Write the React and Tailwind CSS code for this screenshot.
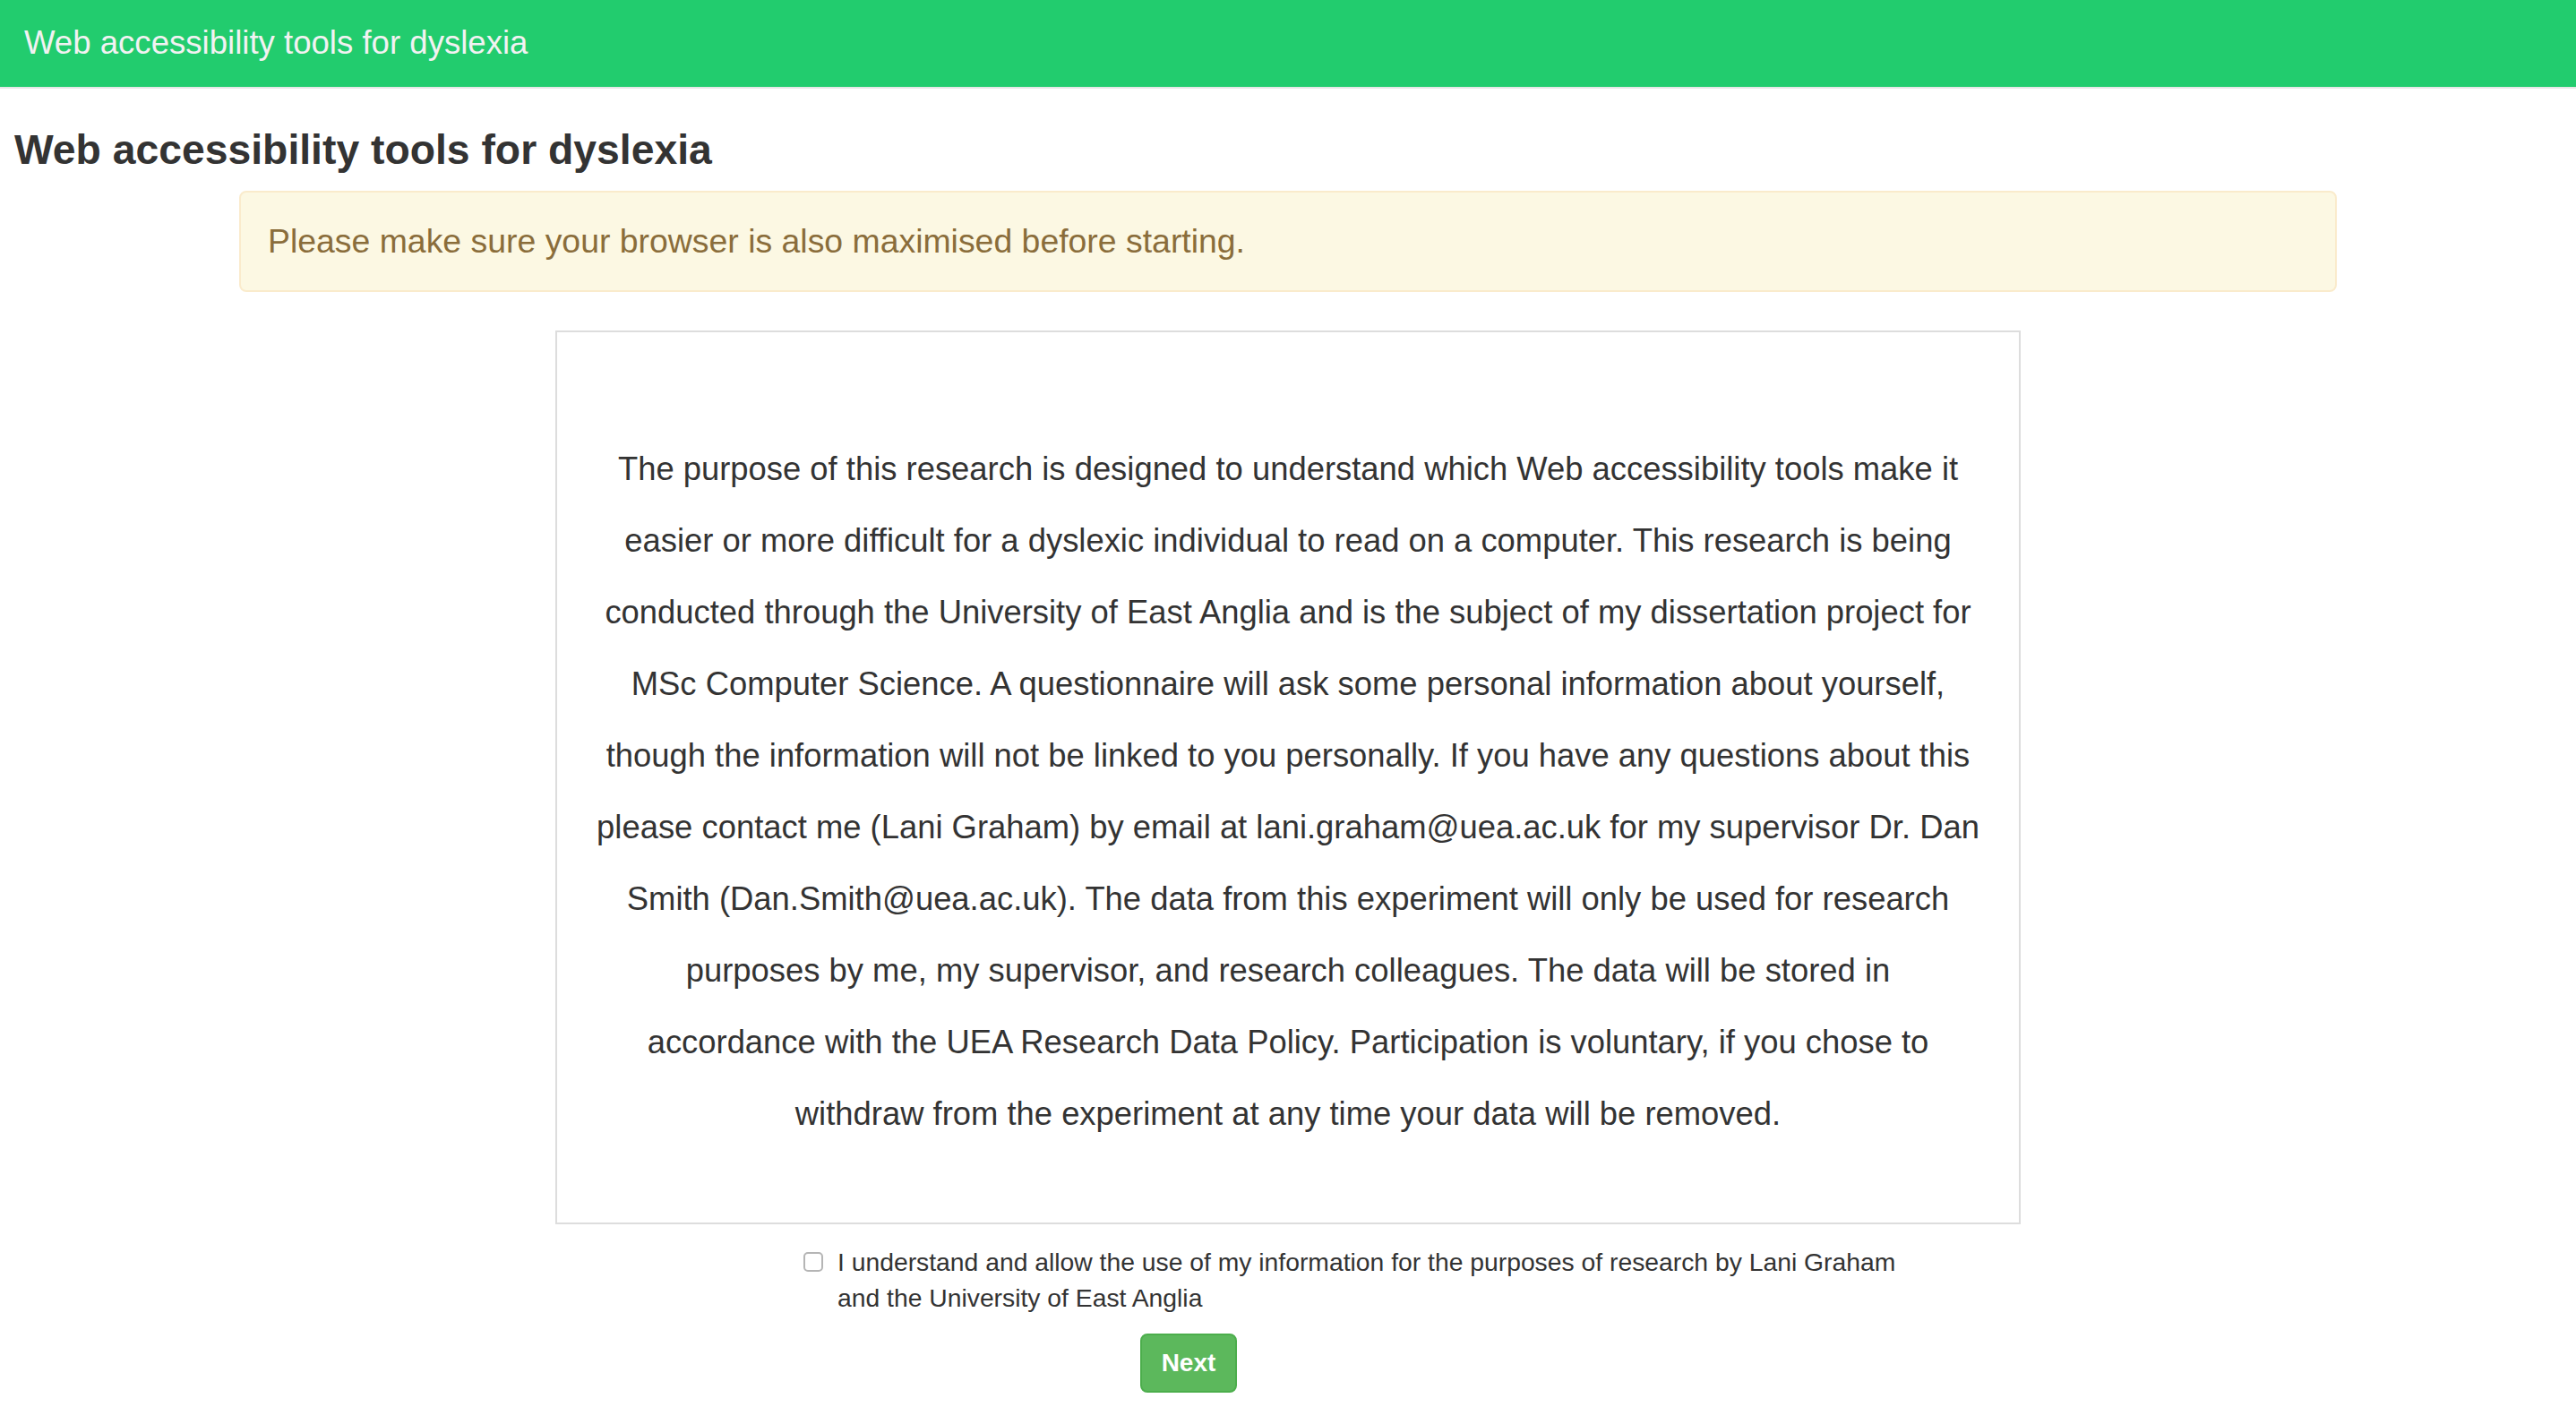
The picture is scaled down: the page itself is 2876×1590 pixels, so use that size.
import React, { useState } from 'react';

const consentLines = [
    'The purpose of this research is designed to understand which Web accessibility tools make it',
    'easier or more difficult for a dyslexic individual to read on a computer. This research is being',
    'conducted through the University of East Anglia and is the subject of my dissertation project for',
    'MSc Computer Science. A questionnaire will ask some personal information about yourself,',
    'though the information will not be linked to you personally. If you have any questions about this',
    'please contact me (Lani Graham) by email at lani.graham@uea.ac.uk for my supervisor Dr. Dan',
    'Smith (Dan.Smith@uea.ac.uk). The data from this experiment will only be used for research',
    'purposes by me, my supervisor, and research colleagues. The data will be stored in',
    'accordance with the UEA Research Data Policy. Participation is voluntary, if you chose to',
    'withdraw from the experiment at any time your data will be removed.',
];

const App = () => {
    const [agreed, setAgreed] = useState(false);

    return (
        <div className="min-h-screen bg-white text-[#333] font-['Liberation_Sans',Arial,sans-serif]">
            <div className="h-[99px] bg-[#22cc6e] border-b-2 border-[#e7e7e7] flex items-center pl-[27px]">
                <span className="text-[36.6px] text-[#f2f2f2] leading-none">Web accessibility tools for dyslexia</span>
            </div>

            <h1 className="mt-[43px] ml-[16px] text-[46.3px] leading-[50px] font-bold text-[#333]">Web accessibility tools for dyslexia</h1>

            <div className="mt-[21px] mx-auto w-[2342px] h-[113px] flex items-center pl-[30px] bg-[#fcf8e3] border-2 border-[#faebcc] rounded-[8px]">
                <p className="text-[37.4px] text-[#8a6d3b]">Please make sure your browser is also maximised before starting.</p>
            </div>

            <div className="mt-[43px] mx-auto w-[1636px] border-2 border-[#ddd] pt-[113px] pb-[81px] px-[30px]">
                <p className="text-[36.4px] leading-[80px] text-center text-[#333]">
                    {consentLines.map((line) => (
                        <span key={line} className="block whitespace-nowrap">{line}</span>
                    ))}
                </p>
            </div>

            <div className="mt-[22px] ml-[897px] flex items-start gap-[16px]">
                <input
                    type="checkbox"
                    checked={agreed}
                    onChange={(e) => setAgreed(e.target.checked)}
                    className="mt-[9px] w-[22px] h-[22px] shrink-0 appearance-none border-2 border-[#b5b5b5] rounded-[5px] bg-white"
                />
                <label className="w-[1222px] text-[28.3px] leading-[40px] text-[#333]">
                    I understand and allow the use of my information for the purposes of research by Lani Graham and the University of East Anglia
                </label>
            </div>

            <div className="mt-[20px] ml-[1273px]">
                <button
                    type="button"
                    className="w-[108px] h-[66px] rounded-[8px] bg-[#5cb85c] border-2 border-[#4cae4c] text-white text-[28px] font-bold"
                >
                    Next
                </button>
            </div>
        </div>
    );
};

export default App;
